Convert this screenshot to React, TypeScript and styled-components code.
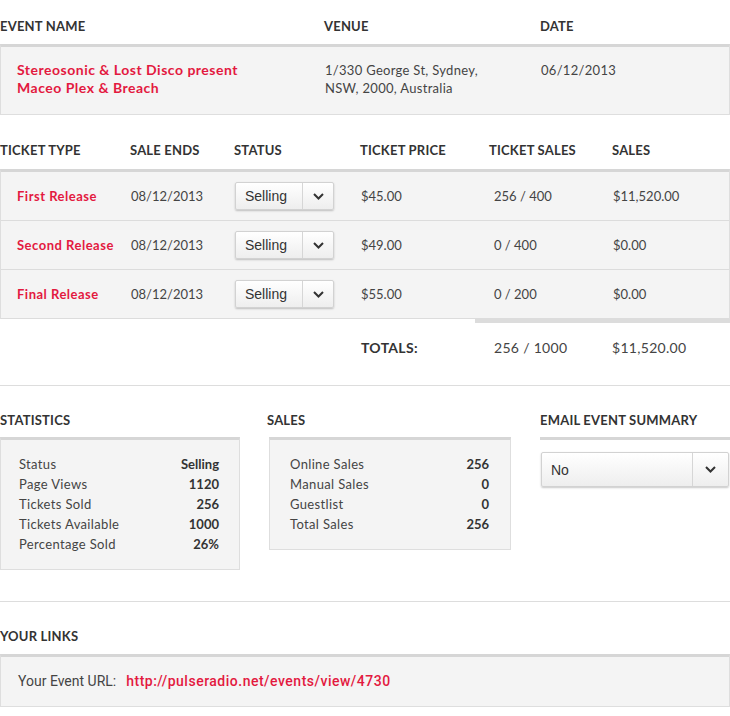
import React from "react";
import styled, { createGlobalStyle } from "styled-components";

const Global = createGlobalStyle`
  html, body { margin: 0; padding: 0; background: #fff; }
  body { font-family: Lato, "Open Sans", sans-serif; color: #444; }
  * { box-sizing: border-box; }
`;

const RED = "#e3193f";

const Page = styled.div`
  width: 730px;
  padding-top: 17px;
`;

const Heading = styled.div`
  font-size: 13px;
  font-weight: 700;
  line-height: 18px;
  color: #333;
  text-transform: uppercase;
  letter-spacing: 0.2px;
`;

const Panel = styled.div`
  background: #f4f4f4;
  border: 1px solid #dedede;
  border-top: 3px solid #d6d6d6;
`;

const EventGrid = styled.div`
  display: grid;
  grid-template-columns: 324px 216px 1fr;
`;

const EventHead = styled(EventGrid)`
  margin-bottom: 9px;
`;

const EventPanel = styled(Panel)`
  padding: 14px 0 17px 0;
`;

const Cell = styled.div<{ $pl?: number }>`
  font-size: 13px;
  line-height: 18px;
  letter-spacing: 0.3px;
  padding-left: ${(p) => p.$pl ?? 0}px;
`;

const RedText = styled.span<{ $size?: number }>`
  color: ${RED};
  font-weight: 700;
  font-size: ${(p) => p.$size ?? 13}px;
  letter-spacing: 0.5px;
`;

const TicketSection = styled.div`
  margin-top: 26px;
`;

const ticketCols = "130px 104px 126px 129px 123px 1fr";

const TicketHead = styled.div`
  display: grid;
  grid-template-columns: ${ticketCols};
  margin-bottom: 10px;
`;

const TicketPanel = styled(Panel)`
  border-bottom: none;
`;

const TicketRow = styled.div`
  display: grid;
  grid-template-columns: ${ticketCols};
  align-items: center;
  height: 49px;
  border-bottom: 1px solid #dcdcdc;
  font-size: 13px;
`;

const TCell = styled.div<{ $pl?: number }>`
  padding-left: ${(p) => p.$pl ?? 0}px;
  white-space: nowrap;
`;

const SelectBox = styled.div<{ $w: number; $h: number }>`
  display: flex;
  width: ${(p) => p.$w}px;
  height: ${(p) => p.$h}px;
  background: linear-gradient(#ffffff, #eeeeee);
  border: 1px solid #d2d2d2;
  border-radius: 2px;
  box-shadow: 0 1px 2px rgba(0, 0, 0, 0.22);
  font-family: "Liberation Sans", Arial, sans-serif;
  font-size: 14px;
  color: #333;
`;

const SelectLabel = styled.div`
  flex: 1;
  display: flex;
  align-items: center;
  padding-left: 9px;
`;

const SelectArrow = styled.div<{ $w: number }>`
  width: ${(p) => p.$w}px;
  border-left: 1px solid #d6d6d6;
  display: flex;
  align-items: center;
  justify-content: center;
`;

const Chevron = () => (
  <svg width="11" height="7" viewBox="0 0 11 7">
    <polyline points="1,1 5.5,5.5 10,1" fill="none" stroke="#333" strokeWidth="2" />
  </svg>
);

const Select = ({ label, w, h, aw }: { label: string; w: number; h: number; aw: number }) => (
  <SelectBox $w={w} $h={h}>
    <SelectLabel>{label}</SelectLabel>
    <SelectArrow $w={aw}>
      <Chevron />
    </SelectArrow>
  </SelectBox>
);

const Totals = styled.div``;

const TotalsShelf = styled.div`
  margin-left: 475px;
  height: 4px;
  background: #dcdcdc;
`;

const TotalsRow = styled.div`
  display: grid;
  grid-template-columns: ${ticketCols};
  align-items: center;
  height: 48px;
  font-size: 14px;
  letter-spacing: 0.3px;
  color: #444;
`;

const TotalsLabel = styled.div`
  grid-column: 4 / 5;
  padding-left: 1px;
  font-weight: 700;
  font-size: 14px;
  color: #333;
  white-space: nowrap;
`;

const Rule = styled.hr<{ $mt: number }>`
  border: none;
  border-top: 1px solid #dddddd;
  margin: ${(p) => p.$mt}px 0 0 0;
`;

const StatsGrid = styled.div`
  display: grid;
  grid-template-columns: 240px 242px 190px;
  column-gap: 29px;
  margin-top: 25px;
  align-items: start;
`;

const StatsHead = styled(Heading)<{ $ml?: number }>`
  margin-bottom: 8px;
  margin-left: ${(p) => p.$ml ?? 0}px;
`;

const StatsPanel = styled(Panel)<{ $pl: number; $pr: number }>`
  padding: 14px ${(p) => p.$pr}px 15px ${(p) => p.$pl}px;
`;

const StatRow = styled.div`
  display: flex;
  justify-content: space-between;
  font-size: 13px;
  line-height: 20px;
  color: #444;
`;

const StatLabel = styled.span`
  letter-spacing: 0.35px;
`;

const StatValue = styled.span`
  font-weight: 700;
  color: #333;
`;

const EmailBar = styled.div`
  height: 3px;
  background: #d6d6d6;
  margin-bottom: 12px;
`;

const EmailSelect = styled.div`
  padding-left: 1px;
`;

const LinksSection = styled.div`
  margin-top: 25px;
`;

const LinksPanel = styled(Panel)`
  margin-top: 9px;
  padding: 15px 17px 16px;
  font-family: Roboto, "Liberation Sans", sans-serif;
  font-size: 14px;
  line-height: 18px;
  color: #444;
`;

const UrlLink = styled.span`
  color: ${RED};
  font-weight: 500;
  letter-spacing: 0.5px;
  margin-left: 10px;
`;

const tickets = [
  { type: "First Release", ends: "08/12/2013", price: "$45.00", sales: "256 / 400", total: "$11,520.00" },
  { type: "Second Release", ends: "08/12/2013", price: "$49.00", sales: "0 / 400", total: "$0.00" },
  { type: "Final Release", ends: "08/12/2013", price: "$55.00", sales: "0 / 200", total: "$0.00" },
];

const stats = [
  ["Status", "Selling"],
  ["Page Views", "1120"],
  ["Tickets Sold", "256"],
  ["Tickets Available", "1000"],
  ["Percentage Sold", "26%"],
];

const sales = [
  ["Online Sales", "256"],
  ["Manual Sales", "0"],
  ["Guestlist", "0"],
  ["Total Sales", "256"],
];

export default function App() {
  return (
    <>
      <Global />
      <Page>
        <EventHead>
          <Heading>Event Name</Heading>
          <Heading>Venue</Heading>
          <Heading>Date</Heading>
        </EventHead>
        <EventPanel>
          <EventGrid>
            <Cell $pl={16}>
              <RedText $size={14}>
                Stereosonic &amp; Lost Disco present
                <br />
                Maceo Plex &amp; Breach
              </RedText>
            </Cell>
            <Cell>
              1/330 George St, Sydney,
              <br />
              NSW, 2000, Australia
            </Cell>
            <Cell>06/12/2013</Cell>
          </EventGrid>
        </EventPanel>

        <TicketSection>
          <TicketHead>
            <Heading>Ticket Type</Heading>
            <Heading>Sale Ends</Heading>
            <Heading>Status</Heading>
            <Heading>Ticket Price</Heading>
            <Heading>Ticket Sales</Heading>
            <Heading>Sales</Heading>
          </TicketHead>
          <TicketPanel>
            {tickets.map((t) => (
              <TicketRow key={t.type}>
                <TCell $pl={16}>
                  <RedText>{t.type}</RedText>
                </TCell>
                <TCell>{t.ends}</TCell>
                <TCell>
                  <Select label="Selling" w={99} h={28} aw={31} />
                </TCell>
                <TCell>{t.price}</TCell>
                <TCell $pl={4}>{t.sales}</TCell>
                <TCell>{t.total}</TCell>
              </TicketRow>
            ))}
          </TicketPanel>
          <Totals>
            <TotalsShelf />
            <TotalsRow>
              <TotalsLabel>TOTALS:</TotalsLabel>
              <TCell $pl={5}>256 / 1000</TCell>
              <TCell>$11,520.00</TCell>
            </TotalsRow>
          </Totals>
        </TicketSection>

        <Rule $mt={14} />

        <StatsGrid>
          <div>
            <StatsHead>Statistics</StatsHead>
            <StatsPanel $pl={18} $pr={20}>
              {stats.map(([k, v]) => (
                <StatRow key={k}>
                  <StatLabel>{k}</StatLabel>
                  <StatValue>{v}</StatValue>
                </StatRow>
              ))}
            </StatsPanel>
          </div>
          <div>
            <StatsHead $ml={-2}>Sales</StatsHead>
            <StatsPanel $pl={20} $pr={21}>
              {sales.map(([k, v]) => (
                <StatRow key={k}>
                  <StatLabel>{k}</StatLabel>
                  <StatValue>{v}</StatValue>
                </StatRow>
              ))}
            </StatsPanel>
          </div>
          <div>
            <StatsHead>Email Event Summary</StatsHead>
            <EmailBar />
            <EmailSelect>
              <Select label="No" w={188} h={35} aw={36} />
            </EmailSelect>
          </div>
        </StatsGrid>

        <Rule $mt={31} />

        <LinksSection>
          <Heading>Your Links</Heading>
          <LinksPanel>
            Your Event URL:
            <UrlLink>http://pulseradio.net/events/view/4730</UrlLink>
          </LinksPanel>
        </LinksSection>
      </Page>
    </>
  );
}
